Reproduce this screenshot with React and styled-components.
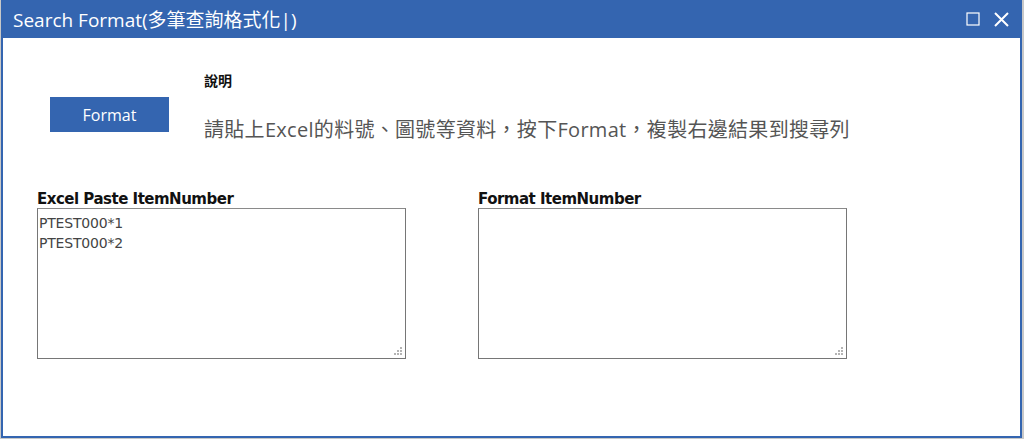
import React from 'react';
import styled, { createGlobalStyle } from 'styled-components';

const GlobalStyle = createGlobalStyle`
  html, body {
    margin: 0;
    padding: 0;
    background: #c8c8c8;
  }
  body {
    font-family: "Noto Sans", "Noto Sans CJK TC", sans-serif;
  }
`;

const Window = styled.div`
  box-sizing: border-box;
  width: 1021px;
  height: 438px;
  margin-left: 1px;
  border: 2px solid #3465b0;
  border-top: none;
  background: #fff;
  display: flex;
  flex-direction: column;
`;

const TitleBar = styled.div`
  height: 38px;
  background: #3465b0;
  display: flex;
  align-items: center;
  justify-content: space-between;
  padding: 0 10px 0 10px;
  color: #fff;
`;

const Title = styled.div`
  font-family: "Open Sans", "Noto Sans CJK TC", sans-serif;
  font-size: 19px;
  letter-spacing: 0;
`;

const TitleButtons = styled.div`
  display: flex;
  align-items: center;
  gap: 13px;
`;

const Body = styled.div`
  flex: 1;
  display: flex;
  flex-direction: column;
  padding: 32px 0 0 33px;
`;

const Intro = styled.div`
  display: flex;
  align-items: flex-start;
  gap: 35px;
`;

const FormatButton = styled.button`
  margin: 27px 0 0 14px;
  width: 119px;
  height: 35px;
  border: none;
  background: #3465b0;
  color: #fff;
  font-family: "Open Sans", sans-serif;
  font-size: 16px;
  cursor: pointer;
`;

const Explain = styled.div`
  display: flex;
  flex-direction: column;
`;

const ExplainTitle = styled.div`
  font-family: "Noto Sans CJK TC", sans-serif;
  font-weight: 700;
  font-size: 14px;
  color: #111;
  line-height: 20px;
`;

const ExplainText = styled.div`
  margin-top: 27px;
  font-family: "Open Sans", "Noto Sans CJK TC", sans-serif;
  font-size: 20px;
  letter-spacing: 0.3px;
  color: #555;
  line-height: 26px;
`;

const Fields = styled.div`
  display: flex;
  gap: 72px;
  margin-top: 47px;
  padding-left: 1px;
`;

const Field = styled.div`
  display: flex;
  flex-direction: column;
`;

const Label = styled.label`
  font-family: "DejaVu Sans", sans-serif;
  font-weight: 700;
  font-size: 15px;
  letter-spacing: -0.5px;
  color: #111;
  line-height: 18px;
`;

const AreaWrap = styled.div`
  position: relative;
  width: 369px;
  height: 151px;
`;

const Area = styled.textarea`
  box-sizing: border-box;
  display: block;
  width: 100%;
  height: 100%;
  margin: 0;
  border: 1px solid #767676;
  border-top-color: #8a8a8a;
  padding: 4px 1px 1px;
  font-family: "DejaVu Sans", sans-serif;
  font-size: 14px;
  letter-spacing: -0.2px;
  line-height: 20px;
  color: #444;
  resize: none;
  outline: none;
`;

const Grip = styled.svg`
  position: absolute;
  right: 3px;
  bottom: 3px;
  pointer-events: none;
`;

const ResizeGrip = () => (
  <Grip width="9" height="9" viewBox="0 0 9 9">
    {[[6, 0], [3, 3], [6, 3], [0, 6], [3, 6], [6, 6]].map(([x, y]) => (
      <rect key={`${x}-${y}`} x={x} y={y} width="2" height="2" fill="#b4b4b4" />
    ))}
  </Grip>
);

const Maximize = () => (
  <svg width="14" height="14" viewBox="0 0 14 14">
    <rect x="1" y="1" width="12" height="12" fill="none" stroke="#fff" strokeWidth="1.2" />
  </svg>
);

const Close = () => (
  <svg width="17" height="17" viewBox="0 0 17 17">
    <path d="M2 2 L15 15 M15 2 L2 15" stroke="#fff" strokeWidth="2" />
  </svg>
);

export default function App() {
  return (
    <>
      <GlobalStyle />
      <Window>
        <TitleBar>
          <Title>Search Format(多筆查詢格式化|)</Title>
          <TitleButtons>
            <Maximize />
            <Close />
          </TitleButtons>
        </TitleBar>
        <Body>
          <Intro>
            <FormatButton>Format</FormatButton>
            <Explain>
              <ExplainTitle>說明</ExplainTitle>
              <ExplainText>請貼上Excel的料號、圖號等資料，按下Format，複製右邊結果到搜尋列</ExplainText>
            </Explain>
          </Intro>
          <Fields>
            <Field>
              <Label>Excel Paste ItemNumber</Label>
              <AreaWrap>
                <Area defaultValue={'PTEST000*1\nPTEST000*2'} />
                <ResizeGrip />
              </AreaWrap>
            </Field>
            <Field>
              <Label>Format ItemNumber</Label>
              <AreaWrap>
                <Area defaultValue="" />
                <ResizeGrip />
              </AreaWrap>
            </Field>
          </Fields>
        </Body>
      </Window>
    </>
  );
}
